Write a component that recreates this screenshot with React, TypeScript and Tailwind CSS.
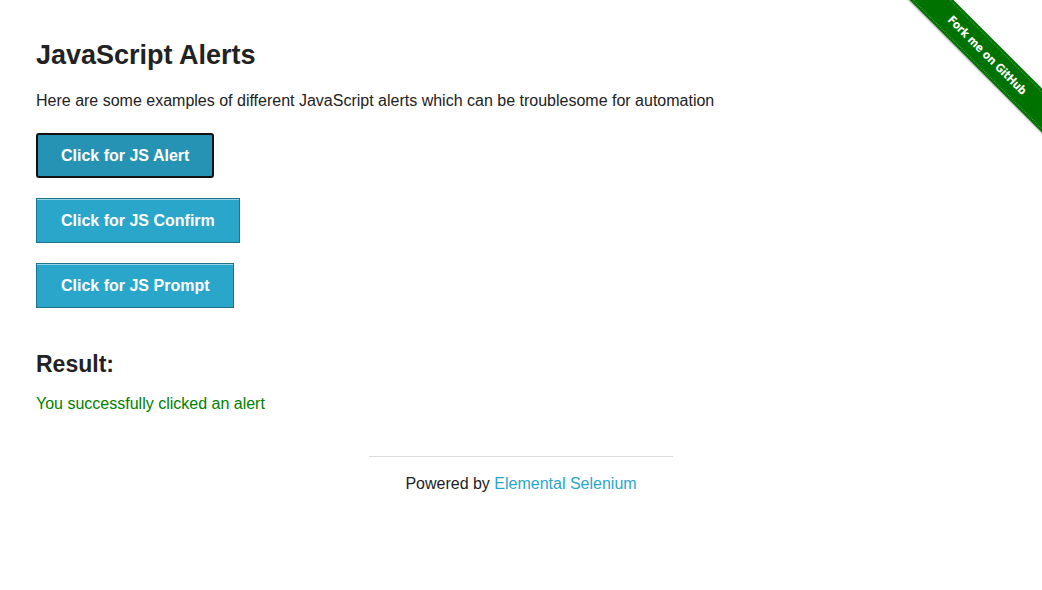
export default function App() {
  const buttons = ["Click for JS Alert", "Click for JS Confirm", "Click for JS Prompt"]

  return (
    <div className="relative min-h-[590px] bg-white text-[#222222] font-['Liberation_Sans',Arial,sans-serif] overflow-hidden">
      {/* Fork ribbon */}
      <div className="absolute top-0 right-0 w-[149px] h-[149px] overflow-hidden">
        <div className="absolute left-[-16px] top-[40px] w-[220px] h-[31px] rotate-45 bg-[#007200] shadow-[0_1px_2px_rgba(0,0,0,0.35)] flex items-center justify-center">
          <div className="absolute inset-x-0 top-[2px] border-t border-dotted border-white/30" />
          <div className="absolute inset-x-0 bottom-[2px] border-t border-dotted border-white/30" />
          <span className="text-white font-bold text-[11.5px] tracking-[-0.2px] font-['DejaVu_Sans_Condensed','Liberation_Sans',sans-serif]">Fork me on GitHub</span>
        </div>
      </div>

      <div className="px-[36px] pt-[39px]">
        <h3 className="text-[27px] leading-[32px] font-bold">JavaScript Alerts</h3>
        <p className="mt-[18px] text-[16px] leading-[24px]">
          Here are some examples of different JavaScript alerts which can be troublesome for automation
        </p>

        {/* Buttons */}
        <ul className="mt-[20px] flex flex-col items-start gap-[20px]">
          {buttons.map((label, i) => (
            <li key={label}>
              <button
                className={
                  i === 0
                    ? "h-[45px] px-[23px] text-[16px] font-bold text-white bg-[#2793b4] border-2 border-[#111] rounded-[3px]"
                    : "h-[45px] px-[24px] text-[16px] font-bold text-white bg-[#2ba6cb] border border-[#1e728c] shadow-[inset_0_1px_0_rgba(255,255,255,0.5)]"
                }
              >
                {label}
              </button>
            </li>
          ))}
        </ul>

        {/* Result */}
        <h4 className="mt-[42px] text-[23px] leading-[28px] font-bold">Result:</h4>
        <p className="mt-[14px] text-[16px] leading-[24px] text-[#008000]">You successfully clicked an alert</p>
      </div>

      {/* Footer */}
      <div className="mt-[40px] flex flex-col items-center">
        <div className="w-[304px] border-t border-[#dddddd]" />
        <div className="mt-[15px] text-[16px] leading-[24px]">
          Powered by <a className="text-[#2ba6cb]" href="#">Elemental Selenium</a>
        </div>
      </div>
    </div>
  )
}
